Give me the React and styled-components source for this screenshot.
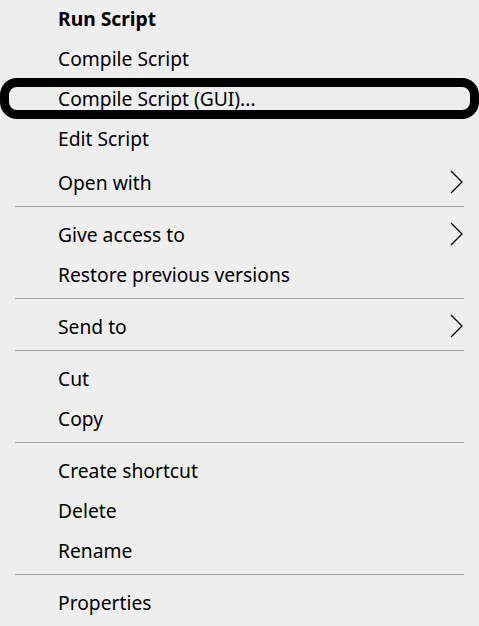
import React from "react";
import styled, { createGlobalStyle } from "styled-components";

const Global = createGlobalStyle`
  html, body { margin: 0; padding: 0; background: #eeeeee; }
  body { overflow: hidden; }
`;

const Menu = styled.div`
  width: 479px;
  height: 626px;
  margin-top: -2px;
  display: flex;
  flex-direction: column;
  background: #eeeeee;
  font-family: "Noto Sans", "Open Sans", sans-serif;
  font-size: 19.25px;
  color: #000;
`;

const Item = styled.div`
  position: relative;
  height: 40px;
  flex: none;
  display: flex;
  align-items: center;
  justify-content: space-between;
  padding: 0 16px 0 58px;
  margin-top: ${(p) => (p.$extra ? "4px" : "0")};
  font-weight: ${(p) => (p.$bold ? 700 : 400)};
  white-space: nowrap;

  ${(p) =>
    p.$outlined &&
    `
    &::after {
      content: "";
      position: absolute;
      left: 0;
      right: 0;
      top: 0;
      bottom: -1px;
      border: 9px solid #000;
      border-radius: 17px;
      pointer-events: none;
    }
  `}
`;

const Separator = styled.div`
  flex: none;
  height: 12px;
  display: flex;
  flex-direction: column;
  padding: 4px 15px 7px;
  box-sizing: border-box;
  &::before {
    content: "";
    display: block;
    height: 1px;
    background: #a0a0a0;
  }
`;

const Chevron = () => (
  <svg width="13" height="24" viewBox="0 0 13 24" aria-hidden="true">
    <polyline points="1,1 12,12 1,23" fill="none" stroke="#000" strokeWidth="1.3" />
  </svg>
);

const groups = [
  [
    { label: "Run Script", bold: true },
    { label: "Compile Script" },
    { label: "Compile Script (GUI)...", outlined: true },
    { label: "Edit Script" },
    { label: "Open with", sub: true, extra: true },
  ],
  [{ label: "Give access to", sub: true }, { label: "Restore previous versions" }],
  [{ label: "Send to", sub: true }],
  [{ label: "Cut" }, { label: "Copy" }],
  [{ label: "Create shortcut" }, { label: "Delete" }, { label: "Rename" }],
  [{ label: "Properties" }],
];

export default function App() {
  return (
    <>
      <Global />
      <Menu>
        {groups.map((g, gi) => (
          <React.Fragment key={gi}>
            {gi > 0 && <Separator />}
            {g.map((it) => (
              <Item key={it.label} $bold={it.bold} $outlined={it.outlined} $extra={it.extra}>
                <span>{it.label}</span>
                {it.sub && <Chevron />}
              </Item>
            ))}
          </React.Fragment>
        ))}
      </Menu>
    </>
  );
}
